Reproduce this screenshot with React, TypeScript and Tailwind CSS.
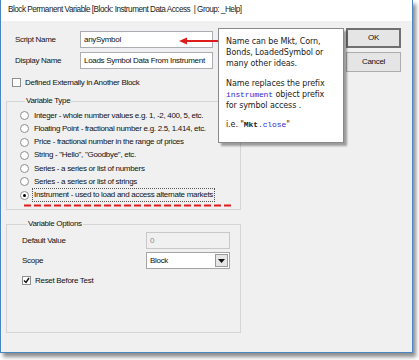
const TYPES = [
  'Integer - whole number values e.g. 1, -2, 400, 5, etc.',
  'Floating Point - fractional number e.g. 2.5, 1.414, etc.',
  'Price - fractional number in the range of prices',
  'String - "Hello", "Goodbye", etc.',
  'Series - a series or list of numbers',
  'Series - a series or list of strings',
  'Instrument - used to load and access alternate markets',
];

function Radio({ checked }: { checked?: boolean }) {
  return (
    <span className="w-[9px] h-[9px] rounded-full border border-[#8e8f8f] bg-white flex items-center justify-center shrink-0">
      {checked && <span className="w-[3px] h-[3px] rounded-full bg-black" />}
    </span>
  );
}

function Check({ checked }: { checked?: boolean }) {
  return (
    <span className="w-[9px] h-[9px] border border-[#8e8f8f] bg-white flex items-center justify-center shrink-0">
      {checked && (
        <svg width="7" height="7" viewBox="0 0 7 7">
          <path d="M1 3.5 L3 5.5 L6 1" stroke="#111" strokeWidth="1.4" fill="none" />
        </svg>
      )}
    </span>
  );
}

export default function App() {
  return (
    <div className="w-[419px] h-[360px] bg-white relative font-['Liberation_Sans',Arial,sans-serif] text-[8px] tracking-[-0.3px] text-[#111] leading-none">
      {/* Dialog window */}
      <div className="w-[413px] h-[353px] flex flex-col border-l border-r border-b border-[#4a86c0] shadow-[3px_4px_4px_rgba(0,0,0,0.45)]">
        {/* Title bar */}
        <div className="h-[21px] shrink-0 bg-white flex items-center pl-[7px] text-[8.2px] tracking-[-0.5px] text-[#222] whitespace-nowrap">
          Block Permanent Variable [Block: Instrument Data Access&nbsp; | Group: _Help]
        </div>

        {/* Body */}
        <div className="flex-1 bg-[#f0f0f0] flex relative">
          {/* Left column */}
          <div className="w-[240px] shrink-0 pl-[5px] pt-[10px] flex flex-col">
            <div className="flex items-center h-[17px]">
              <span className="w-[74px] pl-[9px]">Script Name</span>
              <div className="w-[133px] h-[17px] bg-white border border-[#abadb3] flex items-center pl-[3px]">anySymbol</div>
            </div>
            <div className="flex items-center h-[17px] mt-[4px]">
              <span className="w-[74px] pl-[9px]">Display Name</span>
              <div className="w-[133px] h-[17px] bg-white border border-[#abadb3] flex items-center pl-[3px] overflow-hidden whitespace-nowrap">
                Loads Symbol Data From Instrument
              </div>
            </div>
            <div className="flex items-center mt-[9px] pl-[6px] gap-[4px]">
              <Check />
              <span>Defined Externally in Another Block</span>
            </div>

            {/* Variable Type */}
            <fieldset className="mt-[10px] border border-[#d5d5d5] h-[113px] pl-[13px] pr-[4px] min-w-0">
              <legend className="ml-[5px] px-[1px]">Variable Type</legend>
              <div className="flex flex-col gap-[4.3px] mt-[6px]">
                {TYPES.map((t, i) => (
                  <div key={i} className="flex items-center gap-[5px] h-[9px] whitespace-nowrap">
                    <Radio checked={i === TYPES.length - 1} />
                    {i === TYPES.length - 1 ? (
                      <span className="border border-dotted border-[#555] px-[1px] py-[2px] -ml-[2px]">{t}</span>
                    ) : (
                      <span>{t}</span>
                    )}
                  </div>
                ))}
              </div>
              <svg width="210" height="3" className="mt-[4px] ml-[4px] block">
                <line x1="0" y1="1.5" x2="210" y2="1.5" stroke="#e01b1b" strokeWidth="2" strokeDasharray="7 3" />
              </svg>
            </fieldset>

            {/* Variable Options */}
            <fieldset className="mt-[10px] border border-[#d5d5d5] h-[113px] pl-[15px] pr-[10px] min-w-0">
              <legend className="ml-[5px] px-[1px]">Variable Options</legend>
              <div className="flex items-center justify-between h-[17px] mt-[4px]">
                <span>Default Value</span>
                <div className="w-[84px] h-[17px] bg-[#f0f0f0] border border-[#c8c8c8] flex items-center pl-[3px] text-[#8a8a8a]">0</div>
              </div>
              <div className="flex items-center justify-between h-[17px] mt-[3px]">
                <span>Scope</span>
                <div className="w-[84px] h-[17px] bg-white border border-[#a5a5a5] flex items-center pl-[3px] justify-between">
                  <span>Block</span>
                  <span className="w-[13px] h-[13px] mr-[1px] bg-[#e6e6e6] border border-[#9a9a9a] flex items-center justify-center">
                    <svg width="7" height="4" viewBox="0 0 7 4">
                      <path d="M0 0 H7 L3.5 4 Z" fill="#111" />
                    </svg>
                  </span>
                </div>
              </div>
              <div className="flex items-center gap-[4px] mt-[7px]">
                <Check checked />
                <span>Reset Before Test</span>
              </div>
            </fieldset>
          </div>

          {/* Buttons */}
          <div className="ml-auto mr-[11px] pt-[7px] flex flex-col gap-[4px] shrink-0">
            <div className="w-[55px] h-[20px] border-2 border-[#707070] bg-[#e5e5e5] flex items-center justify-center">OK</div>
            <div className="w-[55px] h-[20px] border border-[#adadad] bg-[#e5e5e5] flex items-center justify-center">Cancel</div>
          </div>

          {/* Red arrow */}
          <svg className="absolute left-[178px] top-[16px]" width="40" height="8" viewBox="0 0 40 8">
            <line x1="6" y1="4" x2="40" y2="4" stroke="#e01b1b" strokeWidth="2" />
            <path d="M0 4 L8 0.5 L8 7.5 Z" fill="#e01b1b" />
          </svg>

          {/* Callout */}
          <div className="absolute left-[217px] top-[7px] w-[126px] h-[115px] bg-white border border-[#8a8a8a] shadow-[3px_3px_2px_rgba(0,0,0,0.35)] px-[7px] pt-[7px] font-['DejaVu_Sans',sans-serif] text-[8px] tracking-[-0.1px] leading-[11px] text-[#222]">
            <p>Name can be Mkt, Corn, Bonds, LoadedSymbol or many other ideas.</p>
            <p className="mt-[9px]">
              Name replaces the prefix <span className="font-['Liberation_Mono',monospace] text-[#2b2bd4] leading-[11px]">instrument</span> object prefix for symbol access .
            </p>
            <p className="mt-[8px]">
              i.e. "<span className="font-['Liberation_Mono',monospace] font-bold leading-[11px]">Mkt</span>
              <span className="font-['Liberation_Mono',monospace] text-[#2b2bd4] leading-[11px]">.close</span>"
            </p>
          </div>
        </div>
      </div>
    </div>
  );
}
